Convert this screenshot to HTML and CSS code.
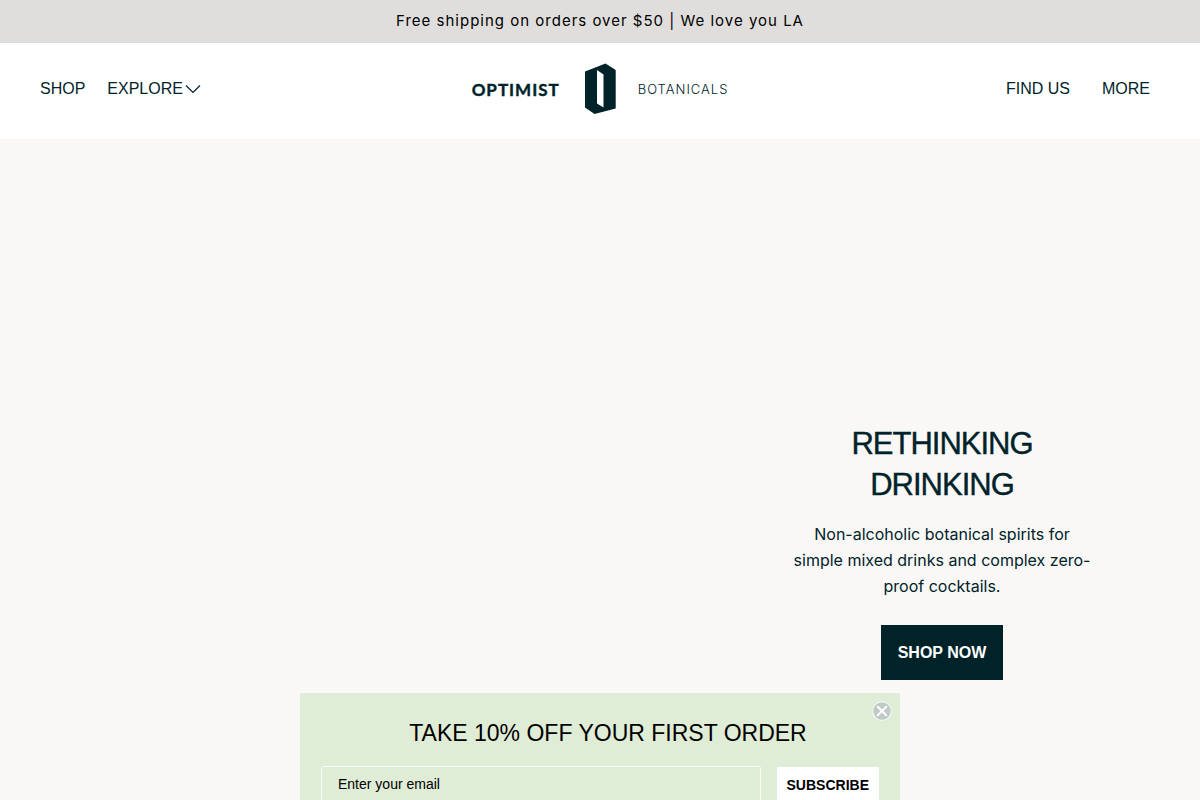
FILE: index.html
```html
<!DOCTYPE html>
<html lang="en">
<head>
<meta charset="utf-8">
<meta name="viewport" content="width=device-width, initial-scale=1">
<title>Optimist Botanicals</title>
<link rel="stylesheet" href="styles.css">
</head>
<body>
<div class="announcement">Free shipping on orders over $50 | We love you LA</div>
<header class="header">
  <nav class="nav" aria-label="Shop">
    <a href="#shop">SHOP</a>
    <button class="nav-menu" type="button" aria-expanded="false">EXPLORE
      <svg width="16" height="10" viewBox="0 0 16 10" fill="none" stroke="currentColor" stroke-width="1.2" aria-hidden="true"><path d="M1 1.500 8 8.500 15 1.500"/></svg>
    </button>
  </nav>
  <a class="logo" href="#home">
    <span class="logo-name">OPTIMIST</span>
    <svg class="logo-mark" width="32" height="52" viewBox="0 0 32 52" aria-hidden="true"><path fill="#00232a" fill-rule="evenodd" d="M1 8.500 21.500 0.500 31.700 7V45.500L10.500 51 1 44.500ZM13 7V40.500L19.500 44.500V11.500Z"/></svg>
    <span class="logo-sub">BOTANICALS</span>
  </a>
  <nav class="nav nav-right" aria-label="More">
    <a href="#find">FIND US</a>
    <a href="#more">MORE</a>
  </nav>
</header>
<main class="hero">
  <section class="hero-copy">
    <h1>RETHINKING DRINKING</h1>
    <p>Non-alcoholic botanical spirits for simple mixed drinks and complex zero-proof cocktails.</p>
    <a class="shop-now" href="#shop">SHOP NOW</a>
  </section>
</main>
<aside class="signup" aria-labelledby="signup-title">
  <button class="close" type="button" aria-label="Close">
    <svg width="20" height="20" viewBox="0 0 20 20" aria-hidden="true"><circle cx="10" cy="10" r="9.300" fill="#c0cac8" stroke="#f3f7f0" stroke-width="1.200"/><path d="M5.800 5.800 14.200 14.200M14.200 5.800 5.800 14.200" stroke="#fff" stroke-width="2" stroke-linecap="round"/></svg>
  </button>
  <h2 id="signup-title">TAKE 10% OFF YOUR FIRST ORDER</h2>
  <form class="signup-form">
    <input type="email" placeholder="Enter your email" aria-label="Enter your email">
    <button class="subscribe" type="button">SUBSCRIBE</button>
  </form>
</aside>
</body>
</html>
```
FILE: styles.css
```css
* {
  box-sizing: border-box;
}

body {
  margin: 0;
  background: #f9f8f6;
  color: #00232a;
  font-family: "Liberation Sans", Arial, sans-serif;
  font-size: 16px;
}

a {
  color: inherit;
  text-decoration: none;
}

button {
  border: 0;
  padding: 0;
  background: none;
  color: inherit;
  font: inherit;
  cursor: pointer;
}

.announcement {
  padding: 10px 20px 11px;
  background: #dfdedc;
  color: #000;
  font-family: Inter, sans-serif;
  font-size: 15px;
  line-height: 22px;
  letter-spacing: 1px;
  text-align: center;
}

.header {
  display: grid;
  grid-template-columns: 1fr auto 1fr;
  align-items: center;
  min-height: 96px;
  padding: 0 50px 4px 40px;
  background: #fff;
}

.nav {
  display: flex;
  gap: 22px;
}

.nav-right {
  justify-content: flex-end;
  gap: 32px;
}

.nav-menu {
  display: flex;
  align-items: center;
  gap: 2px;
}

.logo {
  display: flex;
  align-items: center;
  margin-left: 10px;
}

.logo-name {
  font-family: Lato, sans-serif;
  font-size: 17px;
  font-weight: 700;
  letter-spacing: 1px;
  -webkit-text-stroke: 0.4px currentColor;
}

.logo-mark {
  margin: 0 22px 0 24px;
}

.logo-sub {
  font-family: Inter, sans-serif;
  font-size: 13px;
  font-weight: 300;
  letter-spacing: 1px;
}

.hero {
  display: flex;
  align-items: center;
  justify-content: flex-end;
  min-height: calc(100vh + 25px);
  padding: 0 9%;
}

.hero-copy {
  width: 300px;
  text-align: center;
}

h1 {
  margin: 0 0 16px;
  font-size: 31px;
  font-weight: 400;
  line-height: 41px;
  letter-spacing: -1px;
  -webkit-text-stroke: 0.4px currentColor;
}

.hero-copy p {
  margin: 0 0 26px;
  font-family: Inter, sans-serif;
  line-height: 26px;
}

.shop-now {
  display: inline-block;
  padding: 16px 17px;
  background: #00232a;
  color: #fff;
  font-weight: 700;
  line-height: 23px;
}

.signup {
  position: fixed;
  top: 693px;
  left: 0;
  right: 0;
  max-width: 600px;
  margin: 0 auto;
  padding: 24px 21px;
  border-radius: 2px;
  background: #dfecd6;
  color: #000;
}

.signup h2 {
  margin: 0 0 16px 16px;
  font-size: 23px;
  font-weight: 400;
  line-height: 33px;
  text-align: center;
}

.close {
  position: absolute;
  top: 8px;
  right: 8px;
  height: 20px;
}

.close svg {
  display: block;
}

.signup-form {
  display: flex;
  align-items: center;
  gap: 16px;
}

.signup-form input {
  flex: 1;
  min-width: 0;
  height: 38px;
  padding: 0 16px 2px;
  border: 1px solid #f7faf5;
  border-radius: 2px;
  background: transparent;
  color: #000;
  font: 14px "Liberation Sans", Arial, sans-serif;
}

.signup-form input::placeholder {
  color: #000;
}

.subscribe {
  height: 36px;
  padding: 0 10px;
  background: #fff;
  font-size: 14px;
  font-weight: 700;
}
```
